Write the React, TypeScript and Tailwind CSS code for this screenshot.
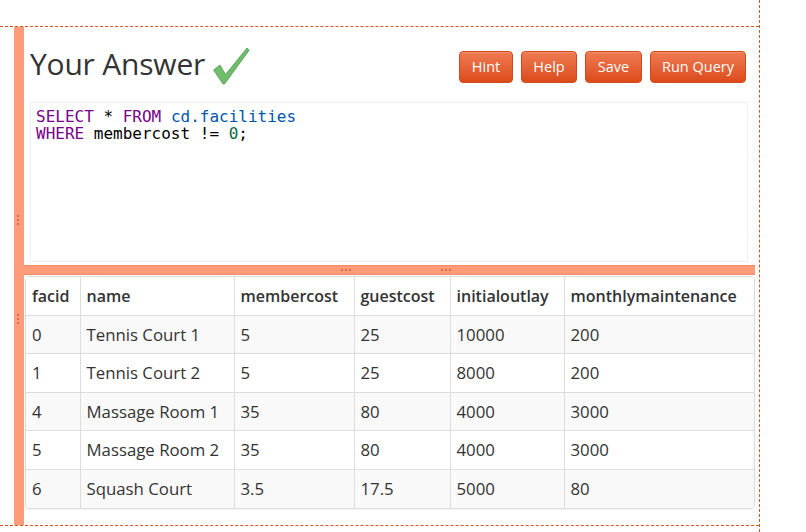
import React from "react";

const columns = [
  { key: "facid", w: "w-[54px]" },
  { key: "name", w: "w-[154px]" },
  { key: "membercost", w: "w-[120px]" },
  { key: "guestcost", w: "w-[96px]" },
  { key: "initialoutlay", w: "w-[114px]" },
  { key: "monthlymaintenance", w: "w-[192px]" },
];

const rows = [
  ["0", "Tennis Court 1", "5", "25", "10000", "200"],
  ["1", "Tennis Court 2", "5", "25", "8000", "200"],
  ["4", "Massage Room 1", "35", "80", "4000", "3000"],
  ["5", "Massage Room 2", "35", "80", "4000", "3000"],
  ["6", "Squash Court", "3.5", "17.5", "5000", "80"],
];

function CheckMark() {
  return (
    <svg width="40" height="40" viewBox="0 0 40 40" className="ml-[7px] mt-[2px]">
      <polygon
        points="1.5,24 8,19 13.5,28.5 35,2 37.2,4.2 12.5,38 11,38"
        fill="#6dbd6b"
        stroke="#529b4f"
        strokeWidth="0.8"
        strokeLinejoin="round"
      />
    </svg>
  );
}

function Grip({ vertical }: { vertical?: boolean }) {
  return (
    <div className={`flex ${vertical ? "flex-col" : "flex-row"} gap-[2px]`}>
      <span className="h-[2px] w-[2px] rounded-full bg-[#c8613f]" />
      <span className="h-[2px] w-[2px] rounded-full bg-[#c8613f]" />
      <span className="h-[2px] w-[2px] rounded-full bg-[#c8613f]" />
    </div>
  );
}

export default function App() {
  const btn =
    "h-[32px] rounded-[4px] border border-[#d4491a] bg-gradient-to-b from-[#ef7a52] to-[#dc4a16] text-[14.5px] text-white shadow-[inset_0_1px_0_rgba(255,255,255,0.15)]";

  return (
    <div className="h-[532px] w-[806px] overflow-hidden bg-white font-['Open_Sans',sans-serif] text-[#333]">
      <div className="h-full w-[760px] border-r border-dashed border-[#d9531e] pt-[26px]">
        <div className="h-[500px] border-y border-dashed border-[#d9531e] pl-[14px]">
          <div className="relative flex h-full flex-col border-l-[10px] border-[#ff9b78] pr-[4px]">
            {/* side grips */}
            <div className="absolute left-[-7px] top-[188px]">
              <Grip vertical />
            </div>
            <div className="absolute left-[-7px] top-[287px]">
              <Grip vertical />
            </div>

            {/* heading + buttons */}
            <div className="flex h-[75px] items-start pl-[6px] pr-[9px] pt-[17px]">
              <h2 className="text-[30px] leading-[40px] tracking-[-0.2px] text-[#333]">Your Answer</h2>
              <CheckMark />
              <div className="ml-auto mt-[7px] flex gap-[8px]">
                <button className={`${btn} w-[54px]`}>Hint</button>
                <button className={`${btn} w-[56px]`}>Help</button>
                <button className={`${btn} w-[57px]`}>Save</button>
                <button className={`${btn} w-[96px]`}>Run Query</button>
              </div>
            </div>

            {/* editor */}
            <div className="ml-[6px] mr-[7px] h-[160px] border border-[#eee] bg-white px-[5px] pt-[5px] font-['DejaVu_Sans_Mono',monospace] text-[16px] leading-[17px] text-black">
              <div>
                <span className="text-[#708]">SELECT</span> * <span className="text-[#708]">FROM</span>{" "}
                <span className="text-[#05a]">cd.facilities</span>
              </div>
              <div>
                <span className="text-[#708]">WHERE</span> membercost != <span className="text-[#164]">0</span>;
              </div>
            </div>

            {/* splitter */}
            <div className="mt-[3px] flex h-[10px] items-center border-y border-[#f58c68] bg-[#ff9b78]">
              <div className="ml-[317px]">
                <Grip />
              </div>
              <div className="ml-[90px]">
                <Grip />
              </div>
            </div>

            {/* result table */}
            <div className="ml-[1px] mt-[1px] overflow-hidden rounded-[4px] border border-[#ddd] shadow-[0_1px_1px_rgba(0,0,0,0.05)]">
              <table className="w-full table-fixed border-collapse text-[16.8px] text-[#333]">
                <thead>
                  <tr className="h-[38px] bg-white">
                    {columns.map((c, i) => (
                      <th
                        key={c.key}
                        className={`${c.w} ${i > 0 ? "border-l border-[#ddd]" : ""} px-[6px] text-left text-[16px] font-semibold`}
                      >
                        {c.key}
                      </th>
                    ))}
                  </tr>
                </thead>
                <tbody>
                  {rows.map((r, ri) => (
                    <tr
                      key={ri}
                      className={`h-[38.6px] border-t border-[#ddd] ${ri % 2 === 0 ? "bg-[#f9f9f9]" : "bg-white"}`}
                    >
                      {r.map((cell, ci) => (
                        <td key={ci} className={`${ci > 0 ? "border-l border-[#ddd]" : ""} px-[6px]`}>
                          {cell}
                        </td>
                      ))}
                    </tr>
                  ))}
                </tbody>
              </table>
            </div>
          </div>
        </div>
      </div>
    </div>
  );
}
